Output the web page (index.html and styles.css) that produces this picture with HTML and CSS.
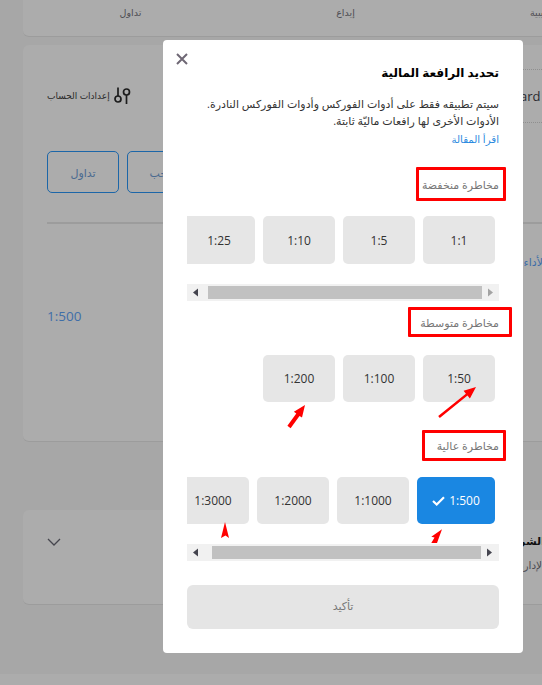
FILE: index.html
```html
<!DOCTYPE html>
<html lang="ar">
<head>
<meta charset="utf-8">
<title>تحديد الرافعة المالية</title>
<link rel="stylesheet" href="styles.css">
</head>
<body>
<div class="page">
  <section class="card tabs">
    <div class="tab">تداول</div>
    <div class="tab">إيداع</div>
    <div class="tab tab-last">الحساب التجريبية</div>
  </section>

  <section class="card account">
    <div class="acct-top">
      <div class="acct-left">
        <div class="settings">
          <span>إعدادات الحساب</span>
          <svg class="sliders" width="17" height="17" viewBox="0 0 17 17"><g fill="none" stroke="#1c1c1c" stroke-width="1.7"><circle cx="4" cy="12" r="3"/><path d="M4 0.5V9"/><circle cx="12.5" cy="5" r="3"/><path d="M12.5 8V17"/></g></svg>
        </div>
        <div class="acct-buttons">
          <div class="outline">تداول</div>
          <div class="outline">سحب</div>
        </div>
      </div>
      <div class="acct-right"><div class="plan">Standard</div></div>
    </div>
    <div class="divider"></div>
    <div class="acct-bottom">
      <div class="lev-value">1:500</div>
      <div class="perf">الأداء</div>
    </div>
  </section>

  <section class="card share">
    <svg class="chevron" width="14" height="8" viewBox="0 0 14 8"><path d="M1 1L7 7L13 1" fill="none" stroke="#46464e" stroke-width="1.3"/></svg>
    <div class="share-text">
      <div class="share-title">الشروط</div>
      <div class="share-sub">الإدارة</div>
    </div>
  </section>
  <div class="strip"></div>
</div>

<div class="modal" dir="rtl">
  <svg class="close" width="14" height="14" viewBox="0 0 14 14"><path d="M2 2L12 12M12 2L2 12" stroke="#6f6875" stroke-width="2" fill="none"/></svg>
  <h1 class="title">تحديد الرافعة المالية</h1>
  <p class="desc">سيتم تطبيقه فقط على أدوات الفوركس وأدوات الفوركس النادرة.<br>الأدوات الأخرى لها رافعات ماليّة ثابتة.</p>
  <a class="link">اقرأ المقالة</a>

  <div class="label label-low"><span>مخاطرة منخفضة</span></div>
  <div class="tiles tiles-low">
    <div class="tile">1:1</div>
    <div class="tile">1:5</div>
    <div class="tile">1:10</div>
    <div class="tile">1:25</div>
  </div>
  <div class="bar bar-low" dir="ltr">
    <svg width="17" height="17" viewBox="0 0 17 17"><path d="M11 4.5V12.5L6 8.5Z" fill="#45454f"/></svg>
    <div class="thumb thumb-low"></div>
    <svg width="17" height="17" viewBox="0 0 17 17"><path d="M6 4.5V12.5L11 8.5Z" fill="#a3a3a3"/></svg>
  </div>

  <div class="label label-mid"><span>مخاطرة متوسطة</span></div>
  <div class="tiles tiles-mid">
    <div class="tile">1:50</div>
    <div class="tile">1:100</div>
    <div class="tile">1:200</div>
  </div>

  <div class="label label-high"><span>مخاطرة عالية</span></div>
  <div class="tiles tiles-high">
    <div class="tile tile-active"><span dir="ltr" class="active-in"><svg width="13" height="10" viewBox="0 0 13 10"><path d="M1 5L4.7 8.5L12 1.2" fill="none" stroke="#fff" stroke-width="2.2"/></svg>1:500</span></div>
    <div class="tile">1:1000</div>
    <div class="tile">1:2000</div>
    <div class="tile">1:3000</div>
  </div>
  <div class="bar bar-high" dir="ltr">
    <svg width="17" height="17" viewBox="0 0 17 17"><path d="M11 4.5V12.5L6 8.5Z" fill="#45454f"/></svg>
    <div class="thumb thumb-high"></div>
    <svg width="17" height="17" viewBox="0 0 17 17"><path d="M6 4.5V12.5L11 8.5Z" fill="#45454f"/></svg>
  </div>

  <div class="confirm">تأكيد</div>

  <svg class="marks" width="360" height="613" viewBox="0 0 360 613">
    <g fill="#f00">
      <polygon points="275.2,376.1 302.9,353.7 300.6,350.7 313,347 306.9,358.5 304.5,355.5 276.8,377.9"/>
      <polygon points="124.4,385.8 133.3,373.5 130.9,371.8 142,365 139,377.6 136.5,375.9 127.6,388.2"/>
      <polygon points="62,482 66,498 62.5,495.5 58,498"/>
      <polygon points="279,489.3 268.3,496.7 271.5,497.5 268.3,503 274,503 276,497.5"/>
    </g>
  </svg>
</div>
</body>
</html>
```

FILE: styles.css
```css
* { box-sizing: border-box; }
html, body { margin: 0; padding: 0; }
body {
  width: 542px;
  height: 685px;
  overflow: hidden;
  position: relative;
  background: #a7a7a7;
  font-family: "Open Sans", "Liberation Sans", "DejaVu Sans", sans-serif;
}
.page { display: flex; flex-direction: column; height: 685px; overflow: hidden; }
.card {
  width: 645px;
  margin-left: 23px;
  flex-shrink: 0;
  background: #acacac;
  border-radius: 6px;
  border-bottom: 1px solid #9c9c9c;
}
.tabs { display: grid; grid-template-columns: repeat(3, 215px); height: 37px; border-radius: 0 0 6px 6px; font-size: 9.5px; color: #4c4c52; }
.tab { text-align: center; padding-top: 6px; }
.tab-last { text-align: left; padding-left: 77px; white-space: nowrap; }
.account { margin-top: 8px; height: 397px; }
.acct-top { display: grid; grid-template-columns: 476px 1fr; height: 177px; }
.acct-left { padding: 41px 0 0 24px; }
.settings { display: flex; align-items: center; height: 19px; gap: 4px; font-size: 9px; color: #2a2a2a; }
.sliders { flex-shrink: 0; }
.acct-buttons { display: flex; gap: 8px; margin-top: 46px; }
.outline {
  width: 72px; height: 42px;
  display: flex; align-items: center; justify-content: center;
  border: 1px solid #1c66a8; border-radius: 5px;
  font-size: 11px; color: #4a6a90;
}
.acct-right { padding-top: 24px; }
.plan {
  height: 54px;
  border-top: 1px dotted #8f8f8f;
  border-bottom: 1px dotted #8f8f8f;
  display: flex; align-items: center;
  font-size: 13px; color: #2a2a30;
  text-indent: -14px;
}
.divider { height: 2px; margin-left: 24px; background: #9c9c9c; }
.acct-bottom { display: grid; grid-template-columns: 476px 1fr; }
.lev-value { padding: 82px 0 0 24px; font-size: 13.5px; line-height: 20px; color: #3f6ea8; }
.perf { width: 47px; padding-top: 28px; font-size: 11px; line-height: 20px; color: #3f6ea8; white-space: nowrap; direction: rtl; }
.share { margin-top: 68px; height: 95px; display: grid; grid-template-columns: 476px 1fr; position: relative; }
.chevron { margin: 28px 0 0 24px; }
.share-text { direction: rtl; width: 46px; white-space: nowrap; padding-top: 21px; }
.share-title { font-size: 11px; font-weight: 700; line-height: 20px; color: #111; }
.share-sub { font-size: 10.5px; line-height: 20px; margin-top: 4px; color: #4c4c52; }
.strip { margin-top: 69px; flex: 1; background: #acacac; }

.modal {
  position: absolute;
  left: 163px; top: 40px;
  width: 360px; height: 613px;
  background: #fff;
  border-radius: 4px;
  padding: 23px 24px 0;
  display: flex; flex-direction: column;
}
.close { position: absolute; left: 12px; top: 12px; }
.title { margin: 0; font-size: 12px; font-weight: 700; line-height: 20px; color: #000; }
.desc { margin: 12px 0 0; font-size: 11px; line-height: 17px; color: #333; white-space: nowrap; }
.link { margin-top: 2px; font-size: 10.2px; line-height: 17px; color: #2a8ae0; }
.label {
  align-self: flex-start;
  margin-right: -7px;
  border: 3px solid #f00;
  border-radius: 1px;
  display: flex; align-items: center;
  padding-right: 4px;
  font-size: 11px; color: #777;
  white-space: nowrap;
}
.label-low { margin-top: 19px; width: 90px; height: 34px; }
.label-mid { margin-top: 6px; margin-right: -13px; width: 104px; height: 30px; padding-right: 10px; }
.label-high { margin-top: 28px; width: 84px; height: 31px; }
.tiles { display: flex; gap: 8px; padding-right: 4px; overflow: hidden; flex-shrink: 0; }
.tile {
  width: 72px; flex-shrink: 0;
  display: flex; align-items: center; justify-content: center;
  background: #e6e6e6; border-radius: 5px;
  font-size: 12px; color: #333;
}
.tiles-low { margin-top: 15px; height: 48px; }
.tiles-mid { margin-top: 18px; height: 47px; }
.tiles-high { margin-top: 16px; height: 47px; }
.tile-active { width: 78px; background: #1a87e2; color: #fff; }
.active-in { display: flex; align-items: center; gap: 4px; }
.bar { display: flex; align-items: center; height: 17px; background: #f1f1f1; flex-shrink: 0; }
.bar svg { flex-shrink: 0; }
.bar-low { margin-top: 20px; }
.bar-high { margin-top: 20px; }
.thumb { height: 13px; background: #c1c1c1; }
.thumb-low { margin-left: 4px; width: 274px; }
.thumb-high { margin-left: 8px; width: 269px; }
.confirm {
  margin-top: 24px; height: 44px;
  display: flex; align-items: center; justify-content: center;
  padding-bottom: 4px;
  background: #e5e5e5; border-radius: 6px;
  font-size: 11px; color: #777;
}
.marks { position: absolute; left: 0; top: 0; pointer-events: none; }
```
